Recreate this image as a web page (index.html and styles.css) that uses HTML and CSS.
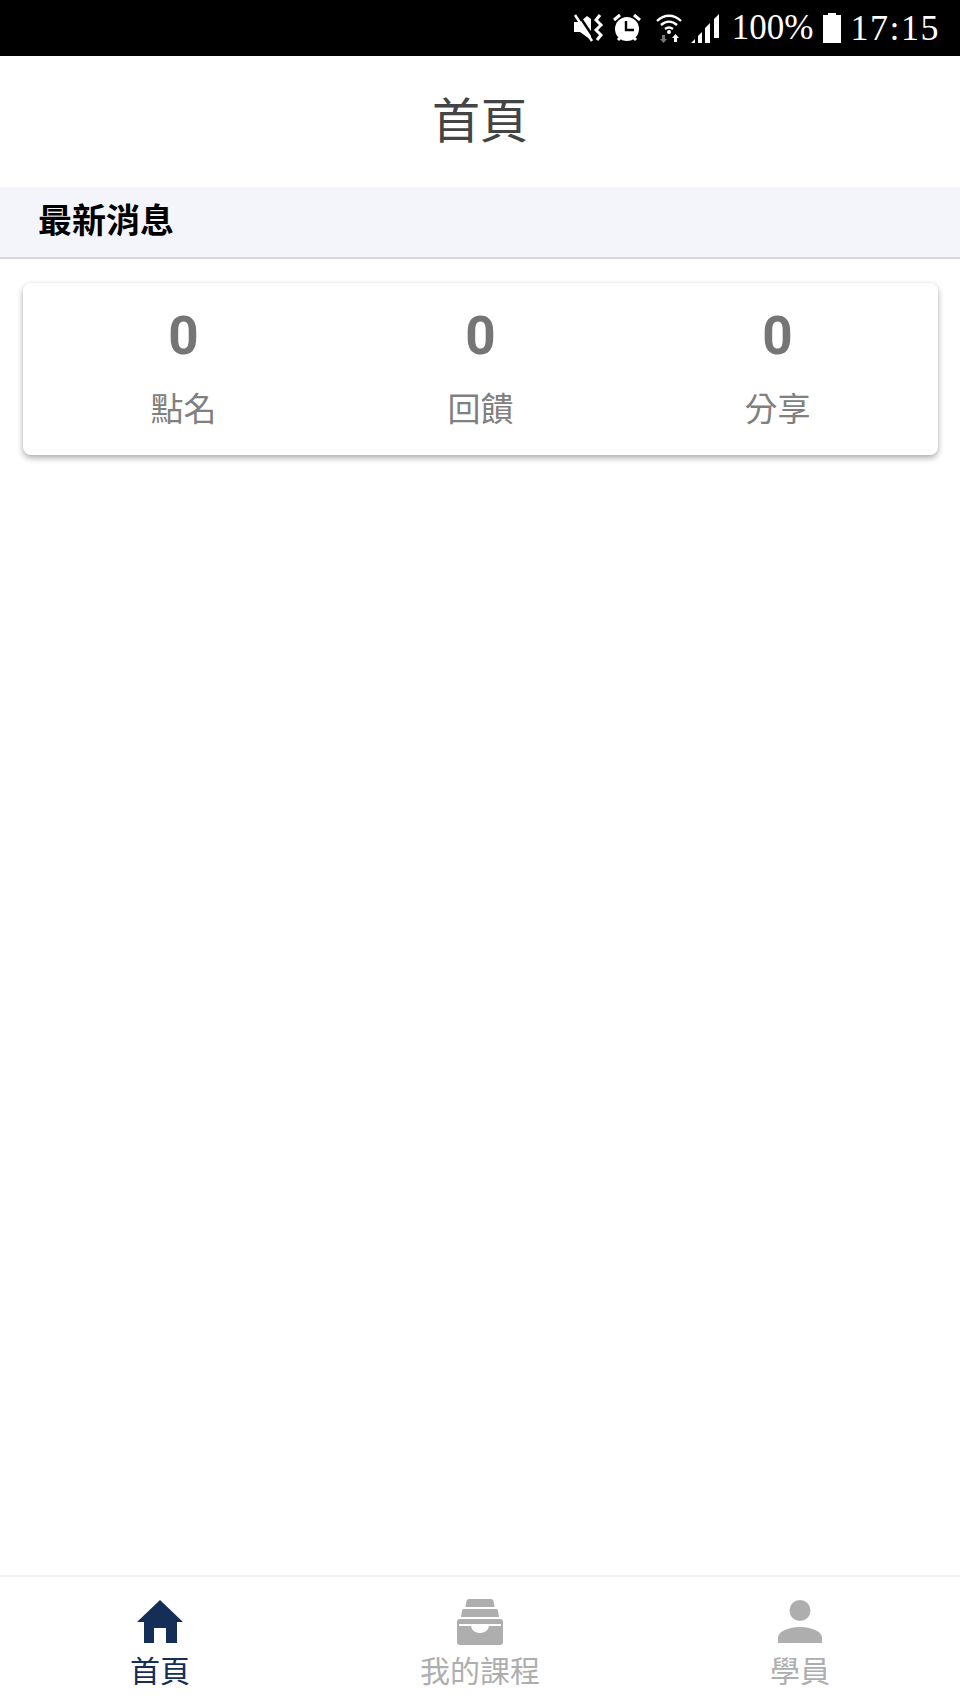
FILE: index.html
```html
<!DOCTYPE html>
<html lang="zh-Hant">
<head>
    <meta charset="UTF-8">
    <meta name="viewport" content="width=device-width, initial-scale=1.0">
    <title>首頁</title>
    <link rel="stylesheet" href="styles.css">
</head>
<body>
    <div class="status-bar">
        <svg class="icon-mute" width="30" height="28" viewBox="0 0 30 28">
            <path fill="#fff" d="M0 8h6l7-6 4 3v21l-11-8H0z"/>
            <path stroke="#000" stroke-width="2.5" d="M4 0l18 27"/>
            <path stroke="#fff" stroke-width="2.500" d="M1 1l17 26" fill="none"/>
            <path stroke="#fff" stroke-width="3" fill="none" d="M26 1l-4 5 5 5-5 5 5 5-4 5"/>
        </svg>
        <svg class="icon-alarm" width="30" height="30" viewBox="0 0 30 30">
            <circle cx="15" cy="16" r="12" fill="#fff"/>
            <path stroke="#fff" stroke-width="3" d="M2 7l6-5M28 7l-6-5M6 27l3-3M24 27l-3-3"/>
            <path stroke="#000" stroke-width="2.4" fill="none" d="M14 8v9h8"/>
        </svg>
        <svg class="icon-wifi" width="26" height="30" viewBox="0 0 26 30">
            <g stroke="#fff" stroke-width="2.4" fill="none">
                <path d="M1 8c7-7 17-7 24 0"/>
                <path d="M5 12c5-4.500 11-4.500 16 0"/>
                <path d="M9 16c3-2.300 5-2.300 8 0"/>
            </g>
            <circle cx="13" cy="19" r="2" fill="#fff"/>
            <path fill="#777" d="M6 22h3v4h2l-3.500 4L4 26h2z"/>
            <path fill="#fff" d="M19.500 21l3.500 4h-2v4h-3v-4h-2z"/>
        </svg>
        <svg class="icon-signal" width="28" height="30" viewBox="0 0 28 30">
            <path fill="#fff" d="M0 30l4-4v4zM7 23l4-4v11H7zM14 15l5-5v20h-5zM23 6l5-5v24h-5z"/>
        </svg>
        <span class="status-pct">100%</span>
        <svg class="icon-battery" width="18" height="30" viewBox="0 0 18 30">
            <path fill="#fff" d="M5 0h8v2h5v28H0V2h5z"/>
        </svg>
        <span class="status-time">17:15</span>
    </div>

    <header class="page-title">首頁</header>

    <div class="section-bar">最新消息</div>

    <div class="stat-card">
        <div class="stat">
            <div class="stat-num">0</div>
            <div class="stat-label">點名</div>
        </div>
        <div class="stat">
            <div class="stat-num">0</div>
            <div class="stat-label">回饋</div>
        </div>
        <div class="stat">
            <div class="stat-num">0</div>
            <div class="stat-label">分享</div>
        </div>
    </div>

    <main class="content"></main>

    <nav class="tab-bar">
        <div class="tab active">
            <svg width="46" height="46" viewBox="0 0 46 46">
                <path fill="#152e57" d="M23 1L46 23H40V44H29V29H17V44H7V23H0Z"/>
            </svg>
            <span>首頁</span>
        </div>
        <div class="tab">
            <svg width="46" height="46" viewBox="0 0 46 46">
                <path fill="#aeaeae" d="M12 0H34Q36 0 36.500 2L37.500 8H8.500L9.500 2Q10 0 12 0Z"/>
                <path fill="#aeaeae" d="M7 10H39Q41 10 41 12L42 18H4L5 12Q5 10 7 10Z"/>
                <path fill="#aeaeae" fill-rule="evenodd" d="M3 20H43Q46 20 46 23V43Q46 46 43 46H3Q0 46 0 43V23Q0 20 3 20ZM2 25V27H14C15 32 19 34 23 34S31 32 32 27H44V25Z"/>
            </svg>
            <span>我的課程</span>
        </div>
        <div class="tab">
            <svg width="46" height="46" viewBox="0 0 46 46">
                <circle cx="23" cy="11.500" r="10.500" fill="#aeaeae"/>
                <path fill="#aeaeae" d="M1 44V39C1 32 12 28 23 28S45 32 45 39V44Z"/>
            </svg>
            <span>學員</span>
        </div>
    </nav>
</body>
</html>
```

FILE: styles.css
```css
* {
    box-sizing: border-box;
}

body {
    font-family: "Noto Sans CJK TC", "Noto Sans", sans-serif;
    background-color: #fff;
    margin: 0;
    padding: 0;
    height: 1706px;
    display: flex;
    flex-direction: column;
    overflow: hidden;
}

.status-bar {
    height: 56px;
    flex: none;
    background-color: #000;
    color: #fff;
    display: flex;
    justify-content: flex-end;
    align-items: center;
    padding-right: 20px;
    font-family: "Liberation Serif", serif;
}

.icon-mute {
    margin-right: 8px;
}

.icon-alarm {
    margin-right: 14px;
}

.icon-wifi {
    margin-right: 9px;
}

.icon-signal {
    margin-right: 13px;
}

.status-pct {
    font-size: 35px;
    margin-right: 10px;
}

.icon-battery {
    margin-right: 9px;
}

.status-time {
    font-size: 36px;
    letter-spacing: 1.5px;
}

.page-title {
    height: 131px;
    flex: none;
    display: flex;
    align-items: center;
    justify-content: center;
    padding-bottom: 9px;
    font-size: 48px;
    color: #444;
}

.section-bar {
    height: 72px;
    flex: none;
    display: flex;
    align-items: center;
    padding-left: 38px;
    padding-bottom: 8px;
    font-size: 34px;
    font-weight: bold;
    color: #000;
    background-color: #f4f5fa;
    border-bottom: 2px solid #d8d8d8;
}

.stat-card {
    flex: none;
    margin: 24px 22px 0 23px;
    height: 172px;
    padding: 0 12px;
    display: grid;
    grid-template-columns: repeat(3, 1fr);
    background-color: #fff;
    border-radius: 8px;
    box-shadow: 0 3px 6px rgba(0, 0, 0, 0.32), 0 0 3px rgba(0, 0, 0, 0.04);
}

.stat {
    display: flex;
    flex-direction: column;
    align-items: center;
    padding-top: 17px;
}

.stat-num {
    font-family: Roboto, sans-serif;
    font-size: 53px;
    font-weight: bold;
    line-height: 72px;
    color: #757575;
}

.stat-label {
    font-size: 33px;
    line-height: 48px;
    margin-top: 11px;
    color: #808080;
}

.content {
    flex: 1;
}

.tab-bar {
    height: 131px;
    flex: none;
    display: grid;
    grid-template-columns: repeat(3, 1fr);
    border-top: 2px solid #efefef;
}

.tab {
    display: flex;
    flex-direction: column;
    align-items: center;
    padding-top: 22px;
    font-size: 30px;
    color: #aeaeae;
}

.tab svg {
    display: block;
}

.tab span {
    line-height: 40px;
    margin-top: 4px;
}

.tab.active {
    color: #152e57;
}
```
